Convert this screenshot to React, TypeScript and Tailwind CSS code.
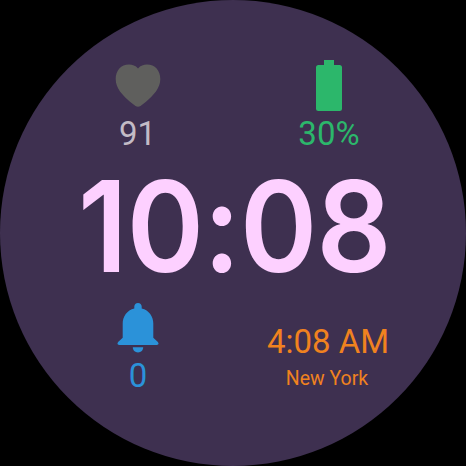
function HeartIcon() {
  return (
    <svg viewBox="0 0 46 43" className="h-[43px] w-[46px]" fill="currentColor" aria-hidden>
      <path d="M23 4.500C25.500 1.500 28.500.5 32 .5 40 .5 45.300 6.500 45.300 15 45.300 24.500 38.500 31 31 37.800L25.500 42Q23 43.600 20.500 42L15 37.800C7.500 31 .7 24.500.7 15 .7 6.500 6 .5 14 .5 17.500.5 20.500 1.500 23 4.500Z" />
    </svg>
  );
}

function BatteryIcon() {
  return (
    <svg viewBox="0 0 26 51" className="h-[51px] w-[26px]" fill="currentColor" aria-hidden>
      <path d="M8 0H18V5H23.500Q26 5 26 7.500V48.500Q26 51 23.500 51H2.500Q0 51 0 48.500V7.500Q0 5 2.500 5H8Z" />
    </svg>
  );
}

function BellIcon() {
  return (
    <svg viewBox="0 0 42 50" className="h-[50px] w-[42px]" fill="currentColor" aria-hidden>
      <path d="M21 0C18.800 0 17.300 1.500 17.300 3.600V5.400C10 7.200 5.700 13.300 5.700 20.500V34.700L1.100 39Q-.6 42 2.200 42H39.800Q42.600 42 40.900 39L36.300 34.700V20.500C36.300 13.300 32 7.200 24.700 5.400V3.600C24.700 1.500 23.200 0 21 0Z" />
      <path d="M15.800 44.300H26.200C26.200 47.400 24 49.400 21 49.400S15.800 47.400 15.800 44.300Z" />
    </svg>
  );
}

export default function App() {
  return (
    <div className="flex h-[466px] w-[466px] bg-black font-['Roboto',sans-serif]">
      <main className="flex h-full w-full flex-col rounded-full bg-[#3e3050] pt-[60px]">
        <section className="flex h-[96px] justify-between pl-[78px] pr-[77px]">
          <div className="flex w-[120px] flex-col items-center text-[#c3bbc6]">
            <div className="flex h-[51px] items-center text-[#5f5f5d]">
              <HeartIcon />
            </div>
            <span className="mr-px text-[33px] leading-[45px]">91</span>
          </div>
          <div className="flex w-[120px] flex-col items-center text-[#2cb76b]">
            <BatteryIcon />
            <span className="text-[33px] leading-[45px]">30%</span>
          </div>
        </section>

        <h1 className="ml-[78px] mt-[5px] origin-left scale-x-[.93] whitespace-nowrap font-['Inter',sans-serif] text-[126px] font-[560] leading-[130px] tracking-[-0.8px] text-[#fdd0ff] [font-feature-settings:'calt'_0]">
          10:08
        </h1>

        <section className="mt-[12px] flex justify-between pl-[78px] pr-[68px]">
          <div className="flex w-[120px] flex-col items-center text-[#2b92d9]">
            <BellIcon />
            <span className="text-[33px] leading-[45px]">0</span>
          </div>
          <div className="flex w-[140px] flex-col items-center pt-[19px] text-[#f0821f]">
            <span className="whitespace-nowrap text-[33px] leading-[40px]">4:08 AM</span>
            <span className="mr-0.5 text-[19.500px] leading-[34px]">New York</span>
          </div>
        </section>
      </main>
    </div>
  );
}
